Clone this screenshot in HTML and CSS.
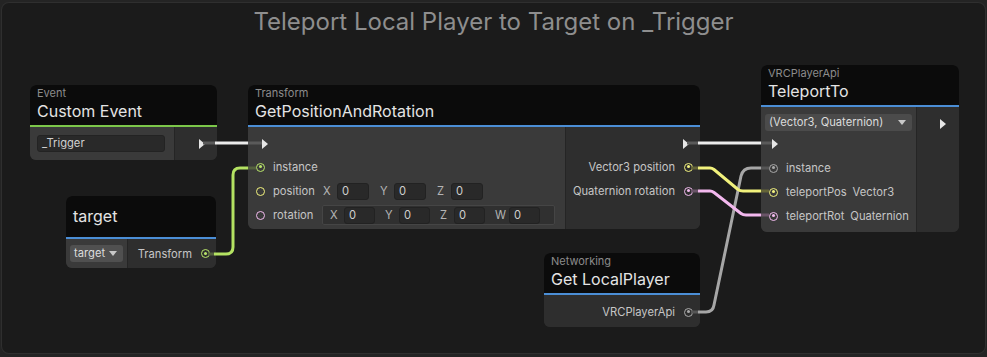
FILE: index.html
```html
<!DOCTYPE html>
<html lang="en">
<head>
    <meta charset="UTF-8">
    <meta name="viewport" content="width=device-width, initial-scale=1.0">
    <title>Teleport Local Player to Target on _Trigger</title>
    <link rel="stylesheet" href="styles.css">
</head>
<body>
    <div class="graph">
        <h1 class="graph-title">Teleport Local Player to Target on _Trigger</h1>

        <!-- Custom Event -->
        <div class="node n-event">
            <div class="node-head head-event">
                <div class="node-cat">Event</div>
                <div class="node-title">Custom Event</div>
            </div>
            <div class="node-body body-event">
                <div class="node-in">
                    <div class="text-field">_Trigger</div>
                </div>
                <div class="node-out out-event">
                    <span class="exec"></span>
                </div>
            </div>
        </div>

        <!-- GetPositionAndRotation -->
        <div class="node n-getpos">
            <div class="node-head">
                <div class="node-cat">Transform</div>
                <div class="node-title">GetPositionAndRotation</div>
            </div>
            <div class="node-body body-getpos">
                <div class="node-in in-getpos">
                    <div class="row"><span class="exec exec-in"></span></div>
                    <div class="row">
                        <span class="port green on"></span>
                        <span class="label">instance</span>
                    </div>
                    <div class="row">
                        <span class="port yellow"></span>
                        <span class="label label-fixed">position</span>
                        <div class="vec">
                            <span class="axis">X</span><span class="num">0</span>
                            <span class="axis">Y</span><span class="num">0</span>
                            <span class="axis">Z</span><span class="num">0</span>
                        </div>
                    </div>
                    <div class="row">
                        <span class="port pink"></span>
                        <span class="label label-fixed">rotation</span>
                        <div class="vec vec-strip">
                            <span class="axis">X</span><span class="num">0</span>
                            <span class="axis">Y</span><span class="num">0</span>
                            <span class="axis">Z</span><span class="num">0</span>
                            <span class="axis">W</span><span class="num">0</span>
                        </div>
                    </div>
                </div>
                <div class="node-out out-getpos">
                    <div class="row row-right"><span class="exec exec-out"></span></div>
                    <div class="row row-right">
                        <span class="label">Vector3 position</span>
                        <span class="port yellow on"></span>
                    </div>
                    <div class="row row-right">
                        <span class="label">Quaternion rotation</span>
                        <span class="port pink on"></span>
                    </div>
                </div>
            </div>
        </div>

        <!-- target variable -->
        <div class="node n-target">
            <div class="node-head head-plain">
                <div class="node-title">target</div>
            </div>
            <div class="node-body body-target">
                <div class="node-in in-target">
                    <div class="dropdown">target</div>
                </div>
                <div class="node-out out-target">
                    <span class="label">Transform</span>
                    <span class="port green on"></span>
                </div>
            </div>
        </div>

        <!-- Get LocalPlayer -->
        <div class="node n-local">
            <div class="node-head">
                <div class="node-cat">Networking</div>
                <div class="node-title">Get LocalPlayer</div>
            </div>
            <div class="node-body body-local">
                <div class="node-out out-local">
                    <span class="label">VRCPlayerApi</span>
                    <span class="port gray on"></span>
                </div>
            </div>
        </div>

        <!-- TeleportTo -->
        <div class="node n-teleport">
            <div class="node-head">
                <div class="node-cat">VRCPlayerApi</div>
                <div class="node-title">TeleportTo</div>
            </div>
            <div class="node-body body-teleport">
                <div class="node-in in-teleport">
                    <div class="dropdown dropdown-wide">(Vector3, Quaternion)</div>
                    <div class="row"><span class="exec exec-in2"></span></div>
                    <div class="row">
                        <span class="port gray on"></span>
                        <span class="label">instance</span>
                    </div>
                    <div class="row">
                        <span class="port yellow on"></span>
                        <span class="label">teleportPos</span>
                        <span class="label type">Vector3</span>
                    </div>
                    <div class="row">
                        <span class="port pink on"></span>
                        <span class="label">teleportRot</span>
                        <span class="label type">Quaternion</span>
                    </div>
                </div>
                <div class="node-out out-teleport">
                    <div class="row row-right"><span class="exec"></span></div>
                </div>
            </div>
        </div>

        <svg class="wires" viewBox="2 3 983 350" width="983" height="350">
            <g fill="none" stroke-width="3" stroke-linecap="butt">
                <!-- stubs inside the nodes -->
                <path d="M203 143 H215 M248 143 H262 M687 143 H698 M761 143 H772" stroke="#5a5a5a"/>
                <path d="M208 254 H214 M248 168 H256" stroke="#55613f"/>
                <path d="M691 168 H698 M761 191 H769" stroke="#646438"/>
                <path d="M691 191 H698 M761 215 H769" stroke="#6a5468"/>
                <path d="M691 312 H698 M761 168 H769" stroke="#555"/>
                <!-- wires -->
                <path d="M215 143 H248 M698 143 H761" stroke="#ececec"/>
                <path d="M698 312 H706 Q713 312 714 305 L741 176 Q743 168 751 168 H761" stroke="#a6a6a6"/>
                <path d="M214 254 H226 Q233 254 233 247 V175 Q233 168 240 168 H248" stroke="#b4e262"/>
                <path d="M698 168 H710 Q712 168 714 169.5 L738 189.5 Q740 191 743 191 H761" stroke="#f1f17c"/>
                <path d="M698 191 H710 Q712 191 714 192.5 L741 213.5 Q743 215 746 215 H761" stroke="#f3b8ee"/>
            </g>
        </svg>
    </div>
</body>
</html>
```

FILE: styles.css
```css
* {
    box-sizing: border-box;
    margin: 0;
    padding: 0;
}
body {
    font-family: Inter, "Noto Sans", sans-serif;
    background-color: #242424;
    width: 987px;
    height: 357px;
    overflow: hidden;
    padding: 3px 2px 0;
    color: #c6c6c6;
    font-size: 11.2px;
}
.graph {
    position: relative;
    height: 350px;
    background-color: #1b1b1b;
    border-radius: 7px;
    box-shadow: 0 0 0 1px #2f2f2f;
}
.graph-title {
    font-size: 24px;
    font-weight: 400;
    color: #8e8e8e;
    text-align: center;
    line-height: 30px;
    padding-top: 4px;
}

/* nodes */
.node {
    position: absolute;
    border-radius: 6px;
    overflow: hidden;
    background-color: #2e2e2e;
    z-index: 1;
}
.n-event { left: 28px; top: 82px; width: 187px; }
.n-getpos { left: 246px; top: 82px; width: 452px; }
.n-target { left: 64px; top: 193px; width: 150px; }
.n-local { left: 542px; top: 250px; width: 156px; }
.n-teleport { left: 759px; top: 62px; width: 198px; }

.node-head {
    height: 42px;
    background-color: #0b0b0b;
    border-bottom: 2px solid #4b8ed6;
    padding: 1px 7px 0;
}
.head-event {
    border-bottom-color: #7cc74a;
}
.head-plain {
    height: 43px;
    display: flex;
    align-items: center;
    padding-top: 0;
}
.node-cat {
    font-size: 11px;
    line-height: 15px;
    color: #8c8c8c;
}
.node-title {
    font-size: 16px;
    line-height: 21px;
    color: #e4e4e4;
}
.node-body {
    display: flex;
}
.node-in {
    background-color: #3a3a3a;
    flex: 1;
}
.node-out {
    background-color: #2e2e2e;
    border-left: 1px solid #252525;
}

/* custom event */
.body-event {
    height: 33px;
}
.body-event .node-in {
    display: flex;
    align-items: center;
    padding-left: 7px;
}
.text-field {
    width: 128px;
    height: 17px;
    line-height: 15px;
    padding-left: 4px;
    background-color: #292929;
    border: 1px solid #232323;
    border-radius: 3px;
    color: #d0d0d0;
}
.out-event {
    width: 43px;
    display: flex;
    align-items: center;
    justify-content: flex-end;
    padding-right: 12px;
}

/* rows */
.row {
    height: 24px;
    display: flex;
    align-items: center;
    padding-left: 8px;
}
.row-right {
    justify-content: flex-end;
    padding-left: 0;
    padding-right: 7px;
}
.label {
    margin-left: 8px;
    white-space: nowrap;
}
.row-right .label,
.out-target .label,
.out-local .label {
    margin-left: 0;
    margin-right: 9px;
}
.label-fixed {
    width: 42px;
}
.type {
    margin-left: 6px;
}

/* ports */
.port {
    position: relative;
    width: 9px;
    height: 9px;
    border-radius: 50%;
    border: 1.5px solid currentColor;
    flex-shrink: 0;
}
.port.on::after {
    content: "";
    position: absolute;
    left: 1.5px;
    top: 1.5px;
    width: 3px;
    height: 3px;
    border-radius: 50%;
    background-color: currentColor;
}
.green { color: #b9e56a; }
.yellow { color: #f2f27e; }
.pink { color: #f3bbef; }
.gray { color: #a9a9a9; }

.exec {
    width: 0;
    height: 0;
    border-left: 6px solid #e6e6e6;
    border-top: 5px solid transparent;
    border-bottom: 5px solid transparent;
}
.exec-in {
    margin-left: 6px;
}
.exec-in2 {
    margin-left: 3px;
}
.row-right .exec {
    margin-right: 4px;
}

/* get position and rotation */
.in-getpos {
    padding: 5px 0 2px;
}
.out-getpos {
    width: 135px;
    padding-top: 5px;
}
.in-getpos .row:first-child,
.out-getpos .row:first-child {
    height: 23px;
}
.vec {
    display: flex;
    align-items: center;
    margin-left: 8px;
    height: 20px;
}
.vec-strip {
    width: 233px;
    margin-left: 7px;
    padding-left: 7px;
    background-color: #303030;
    border: 1px solid #454545;
    border-radius: 2px;
}
.axis {
    color: #b4b4b4;
    width: 14px;
}
.num {
    width: 32px;
    height: 17px;
    line-height: 15px;
    padding-left: 4px;
    margin-right: 11px;
    background-color: #292929;
    border: 1px solid #222;
    border-radius: 3px;
    color: #d0d0d0;
}
.vec-strip .num {
    width: 31px;
    margin-right: 10px;
}
.vec .num:first-of-type {
    width: 34px;
}

/* dropdowns */
.dropdown {
    position: relative;
    height: 17px;
    line-height: 17px;
    padding-left: 4px;
    background-color: #505050;
    border-radius: 3px;
    color: #dcdcdc;
}
.dropdown::after {
    content: "";
    position: absolute;
    right: 6px;
    top: 6px;
    border-top: 5px solid #c8c8c8;
    border-left: 4px solid transparent;
    border-right: 4px solid transparent;
}

/* target */
.body-target {
    height: 29px;
}
.in-target {
    flex: 0 0 61px;
    display: flex;
    align-items: center;
    padding-left: 4px;
}
.in-target .dropdown {
    width: 53px;
}
.out-target {
    flex: 1;
    display: flex;
    align-items: center;
    justify-content: flex-end;
    padding-right: 6px;
}

/* get local player */
.body-local {
    height: 32px;
}
.out-local {
    flex: 1;
    border-left: none;
    display: flex;
    align-items: center;
    justify-content: flex-end;
    padding: 2px 7px 0 0;
}

/* teleport to */
.in-teleport {
    padding: 7px 0 4px;
}
.dropdown-wide {
    margin: 0 4px 1px;
    background-color: #4b4b4b;
}
.out-teleport {
    width: 43px;
    padding-top: 5px;
}
.out-teleport .row-right {
    padding-right: 9px;
}

.wires {
    position: absolute;
    left: 0;
    top: 0;
    z-index: 2;
    pointer-events: none;
}
```
